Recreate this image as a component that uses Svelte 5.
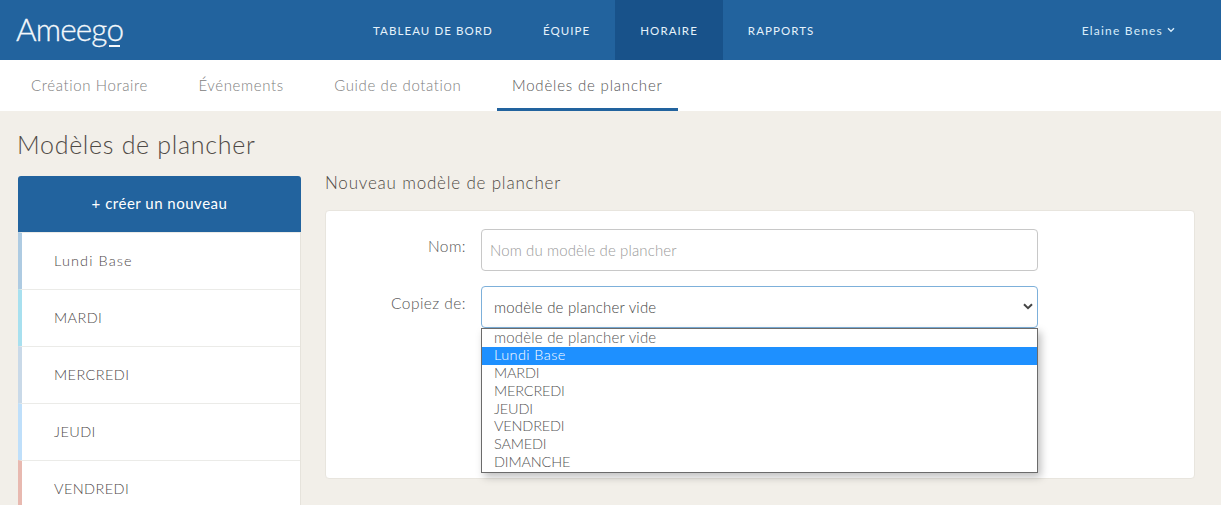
<script>
  const mainNav = ['TABLEAU DE BORD', 'ÉQUIPE', 'HORAIRE', 'RAPPORTS'];
  const subNav = ['Création Horaire', 'Événements', 'Guide de dotation', 'Modèles de plancher'];
  const templates = [
    { name: 'Lundi Base', color: '#aecbe2' },
    { name: 'MARDI', color: '#a8e0ef' },
    { name: 'MERCREDI', color: '#c9d9e8' },
    { name: 'JEUDI', color: '#bfdffa' },
    { name: 'VENDREDI', color: '#e8b9b0' },
    { name: 'SAMEDI', color: '#d8c9e8' },
    { name: 'DIMANCHE', color: '#cfe3c4' }
  ];
  const options = ['modèle de plancher vide', ...templates.map((t) => t.name)];
  // the rest of the list is below the fold
  const visible = templates.slice(0, 5);
</script>

<div class="page">
  <header class="topbar">
    <div class="logo">Ameeg<span class="logo-o">o</span></div>
    <nav class="main-nav">
      {#each mainNav as item}
        <span class="main-link" class:active={item === 'HORAIRE'}>{item}</span>
      {/each}
    </nav>
    <div class="user">
      Elaine Benes
      <svg width="8" height="6" viewBox="0 0 8 6" fill="none" stroke="currentColor" stroke-width="1.4">
        <path d="M1 1.2 4 4.2 7 1.2" />
      </svg>
    </div>
  </header>

  <nav class="sub-nav">
    {#each subNav as item, i}
      <span class="sub-link" class:current={i === 3}>{item}</span>
    {/each}
  </nav>

  <main class="content">
    <h1>Modèles de plancher</h1>
    <div class="columns">
      <aside class="sidebar">
        <button class="create">+ créer un nouveau</button>
        <ul>
          {#each visible as t}
            <li style="border-left-color: {t.color}" class:mixed={t.name === 'Lundi Base'}>{t.name}</li>
          {/each}
        </ul>
      </aside>

      <section class="editor">
        <h2>Nouveau modèle de plancher</h2>
        <div class="panel">
          <div class="row">
            <span class="label">Nom:</span>
            <div class="field placeholder">Nom du modèle de plancher</div>
          </div>
          <div class="row">
            <span class="label">Copiez de:</span>
            <div class="field select">
              modèle de plancher vide
              <svg class="arrow" width="10" height="7" viewBox="0 0 10 7" fill="none" stroke="#444" stroke-width="2">
                <path d="M1 1.2 5 5.2 9 1.2" />
              </svg>
              <div class="dropdown">
                {#each options as opt, i}
                  <div class="option" class:blank={i === 0} class:hl={opt === 'Lundi Base'}>{opt}</div>
                {/each}
              </div>
            </div>
          </div>
        </div>
      </section>
    </div>
  </main>
</div>

<style>
  :global(body) {
    overflow: hidden;
    background: #f2efe9;
  }

  .page {
    height: 505px;
    overflow: hidden;
    font-family: Lato, "Open Sans", sans-serif;
    color: #555;
  }

  .topbar {
    height: 60px;
    background: #22639e;
    display: flex;
    align-items: center;
    color: #fff;
  }

  .logo {
    width: 348px;
    box-sizing: border-box;
    padding: 0 0 3px 16px;
    font-size: 31.5px;
    font-weight: 300;
    letter-spacing: -0.85px;
    -webkit-text-stroke: 0.3px #f4f8fb;
    color: #f4f8fb;
  }

  .logo-o {
    position: relative;
    display: inline-block;
  }

  .logo-o::after {
    content: '';
    position: absolute;
    left: 2px;
    right: 3px;
    bottom: 1px;
    height: 2px;
    background: #f4f8fb;
  }

  .main-nav {
    display: flex;
    height: 100%;
  }

  .main-link {
    display: flex;
    align-items: center;
    padding: 0 25px;
    font-size: 11.5px;
    font-weight: 400;
    letter-spacing: 1.08px;
    color: #e6f2fb;
  }

  .main-link.active {
    background: #18528a;
  }

  .user {
    margin-left: auto;
    margin-right: 46px;
    display: flex;
    align-items: center;
    gap: 4px;
    font-size: 12px;
    letter-spacing: 1.2px;
    color: #d8ecfa;
  }

  .sub-nav {
    height: 51px;
    background: #fff;
    display: flex;
    padding-left: 16px;
    gap: 20.5px;
  }

  .sub-link {
    box-sizing: border-box;
    height: 51px;
    padding: 1px 15px 0;
    display: flex;
    align-items: center;
    font-size: 15px;
    font-weight: 300;
    letter-spacing: 0.62px;
    color: #808080;
    border-bottom: 3px solid transparent;
  }

  .sub-link.current {
    color: #555;
    letter-spacing: 0.82px;
    border-bottom-color: #22639e;
  }

  .content {
    padding: 0 26px 0 18px;
  }

  h1 {
    margin: 0 0 0 -1px;
    padding-top: 19px;
    height: 46px;
    font-size: 25px;
    line-height: 29px;
    font-weight: 300;
    letter-spacing: 0.7px;
    color: #4f4a45;
  }

  .columns {
    display: flex;
    gap: 24px;
  }

  .sidebar {
    width: 283px;
    flex: none;
  }

  .create {
    display: block;
    width: 100%;
    height: 56px;
    padding: 0 0 2px;
    border: 0;
    border-radius: 3px 3px 0 0;
    background: #22639e;
    color: #fff;
    font-family: inherit;
    font-size: 15px;
    letter-spacing: 0.5px;
  }

  ul {
    list-style: none;
    margin: 0;
    padding: 0;
    background: #fff;
    border-right: 1px solid #e6e3dc;
  }

  li {
    box-sizing: border-box;
    height: 57px;
    padding: 0 0 2px 32px;
    display: flex;
    align-items: center;
    border-left: 4px solid;
    border-top: 1px solid #ebebe8;
    font-size: 14.5px;
    font-weight: 300;
    letter-spacing: 0.4px;
    color: #4f4a4a;
  }

  li.mixed {
    letter-spacing: 1.1px;
  }

  .editor {
    flex: 1;
    min-width: 0;
  }

  h2 {
    margin: 0;
    height: 34px;
    font-size: 17px;
    line-height: 13px;
    font-weight: 300;
    letter-spacing: 0.8px;
    color: #4f4a45;
  }

  .panel {
    box-sizing: border-box;
    height: 269px;
    padding: 18px 156px 0 0;
    background: #fff;
    border: 1px solid #e8e5de;
    border-radius: 4px;
  }

  .row {
    display: flex;
    gap: 15px;
    margin-bottom: 15px;
  }

  .label {
    width: 140px;
    text-align: right;
    padding-top: 8px;
    font-size: 15.5px;
    font-weight: 300;
    letter-spacing: 0.45px;
    color: #555;
  }

  .field {
    position: relative;
    box-sizing: border-box;
    flex: 1;
    height: 42px;
    padding-bottom: 1px;
    border: 1px solid #c8c8c8;
    border-radius: 4px;
    display: flex;
    align-items: center;
    font-size: 15px;
    font-weight: 300;
  }

  .placeholder {
    padding-left: 8px;
    letter-spacing: 0.12px;
    color: #999;
  }

  .select {
    padding-left: 12px;
    border-color: #7db0da;
    letter-spacing: 0.2px;
    color: #444;
  }

  .arrow {
    position: absolute;
    right: 4px;
    top: 16px;
  }

  /* open native-style list lies over the panel */
  .dropdown {
    position: absolute;
    top: 41px;
    left: -1px;
    right: -1px;
    box-sizing: border-box;
    height: 145px;
    background: #fff;
    border: 1px solid #6b6b6b;
    box-shadow: 3px 4px 8px rgba(0, 0, 0, 0.25);
  }

  .option {
    height: 17.9px;
    line-height: 16px;
    padding-left: 12px;
    font-size: 14.5px;
    font-weight: 300;
    letter-spacing: -0.18px;
    color: #555;
  }

  .option.blank {
    font-size: 15px;
    letter-spacing: 0.2px;
  }

  .option.hl {
    background: #1e90ff;
    color: #fff;
    letter-spacing: 0.4px;
  }
</style>
